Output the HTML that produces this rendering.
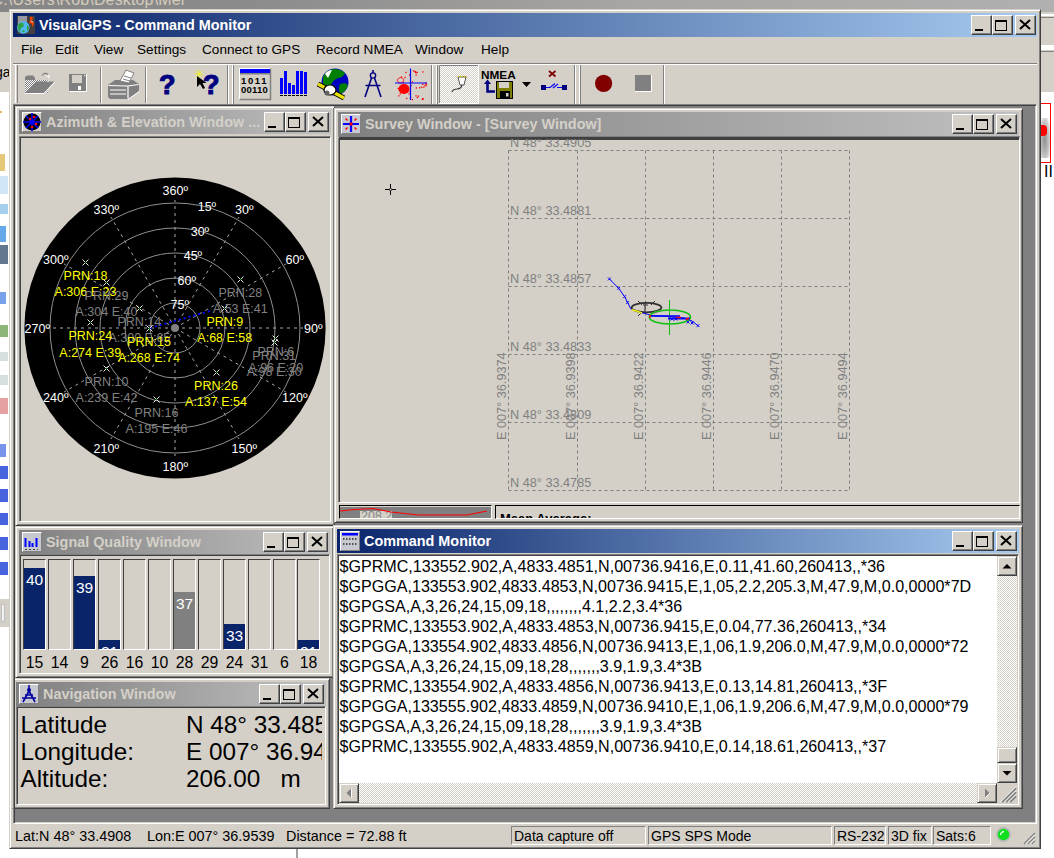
<!DOCTYPE html>
<html><head><meta charset="utf-8">
<style>
*{box-sizing:border-box;margin:0;padding:0}
html,body{width:1054px;height:858px;overflow:hidden;background:#fff;font-family:"Liberation Sans",sans-serif;}
.a{position:absolute}
.frame{position:absolute;background:#d4d0c8;border:1px solid;border-color:#d4d0c8 #404040 #404040 #d4d0c8;box-shadow:inset 1px 1px #fff,inset -1px -1px #808080}
.sunk{position:absolute;border:1px solid;border-color:#808080 #fff #fff #808080;box-shadow:inset 1px 1px #404040,inset -1px -1px #d4d0c8}
.tbar{position:absolute;height:24px;overflow:hidden}
.act{background:linear-gradient(to right,#0a246a,#a6caf0)}
.inact{background:linear-gradient(to right,#808080,#c0c0c0)}
.btn{position:absolute;width:21px;height:20px;background:#d4d0c8;border:1px solid;border-color:#fff #404040 #404040 #fff;box-shadow:inset -1px -1px #808080}
.t{position:absolute;white-space:nowrap;line-height:1}
</style></head><body>

<div class="a" style="left:0px;top:0px;width:1054px;height:858px;background:#fff"></div>
<div class="a" style="left:0px;top:0px;width:1054px;height:12px;background:linear-gradient(to right,#868686,#8c8c8c 25%,#a8a6a4 60%,#b0b0b0)"></div>
<div class="t" style="left:-8.5px;top:-8.5px;font-size:16px;letter-spacing:0.15px;color:#d4ccbc">C:\Users\Rob\Desktop\Mer</div>
<div class="a" style="left:0px;top:12px;width:9px;height:80px;background:#d4d0c8"></div>
<div class="t" style="left:-5px;top:65px;font-size:14px;color:#000">ga</div>
<div class="a" style="left:1041px;top:12px;width:13px;height:80px;background:#d4d0c8"></div>
<div class="a" style="left:1041px;top:14px;width:13px;height:2px;background:#fff"></div>
<div class="a" style="left:1041px;top:17px;width:13px;height:1px;background:#808080"></div>
<div class="a" style="left:1041px;top:45px;width:13px;height:5px;background:#fff"></div>
<div class="a" style="left:1041px;top:51px;width:13px;height:1px;background:#808080"></div>
<div class="a" style="left:1040px;top:103px;width:11px;height:60px;border:1px solid #f00;background:#fff"></div>
<div class="a" style="left:1041px;top:118px;width:9px;height:40px;background:radial-gradient(ellipse at 40% 55%,#909090,#c8c8c8 60%,#fff 90%)"></div>
<div class="a" style="left:1041px;top:125px;width:6px;height:11px;background:#f00;border-radius:0 4px 4px 0"></div>
<div class="t" style="left:1044px;top:164px;font-family:"Liberation Serif";font-size:13px;font-weight:bold;color:#000">II</div>
<div class="a" style="left:296px;top:849px;width:2px;height:9px;background:#a0a0a0"></div>
<div class="a" style="left:0px;top:599px;width:9px;height:28px;background:#d4d0c8"></div>
<div class="a" style="left:1px;top:604px;width:4px;height:18px;background:#f0f0f0;border:1px solid #c0c0c0"></div>
<div class="a" style="left:0px;top:111px;width:2px;height:2px;background:#f0a040;opacity:0.85"></div>
<div class="a" style="left:0px;top:154px;width:5px;height:17px;background:#e0c060;opacity:0.85"></div>
<div class="a" style="left:0px;top:176px;width:8px;height:18px;background:#c8e0f4;opacity:0.85"></div>
<div class="a" style="left:0px;top:204px;width:8px;height:10px;background:#98c8ec;opacity:0.85"></div>
<div class="a" style="left:0px;top:226px;width:6px;height:16px;background:#4a98e4;opacity:0.85"></div>
<div class="a" style="left:0px;top:245px;width:8px;height:19px;background:#48607a;opacity:0.85"></div>
<div class="a" style="left:0px;top:292px;width:6px;height:12px;background:#6090e8;opacity:0.85"></div>
<div class="a" style="left:0px;top:325px;width:8px;height:12px;background:#7aa860;opacity:0.85"></div>
<div class="a" style="left:0px;top:352px;width:8px;height:9px;background:#d0d8d8;opacity:0.85"></div>
<div class="a" style="left:0px;top:375px;width:8px;height:10px;background:#d0d8d8;opacity:0.85"></div>
<div class="a" style="left:0px;top:398px;width:8px;height:16px;background:#e09090;opacity:0.85"></div>
<div class="a" style="left:0px;top:444px;width:6px;height:13px;background:#6080e8;opacity:0.85"></div>
<div class="a" style="left:0px;top:466px;width:8px;height:13px;background:#2848d8;opacity:0.85"></div>
<div class="a" style="left:0px;top:489px;width:8px;height:13px;background:#2848d8;opacity:0.85"></div>
<div class="a" style="left:0px;top:513px;width:8px;height:12px;background:#2848d8;opacity:0.85"></div>
<div class="a" style="left:0px;top:537px;width:8px;height:13px;background:#2848d8;opacity:0.85"></div>
<div class="a" style="left:0px;top:562px;width:8px;height:13px;background:#2848d8;opacity:0.85"></div>
<div class="frame" style="left:9px;top:9px;width:1032px;height:840px"></div>
<div class="tbar act" style="left:13px;top:13px;width:1024px"></div>
<svg class="a" style="left:17px;top:16px" width="18" height="18" viewBox="0 0 18 18"><rect width="18" height="18" fill="#454040"/><rect x="1" y="0" width="9" height="8" fill="#9898a0"/><circle cx="6.3" cy="11.5" r="6.2" fill="#50b8f0"/><path d="M1 9Q3 6 6 7L7 10L4 12L3 16Q1 14 1 11Z" fill="#30a040"/><path d="M10 9Q12 10 12 13L10 15Z" fill="#30a040"/><path d="M5 15Q6 17 8 16L7 14Z" fill="#30a040"/><path d="M13 1Q16 0 16 3L14 5L17 6Q17 9 15 11L15 8L12 7L13 4Z" fill="#f04000"/><path d="M14 5L16 6" stroke="#fff" stroke-width="0.8"/></svg>
<div class="t" style="left:39px;top:17.5px;font-size:14.4px;font-weight:bold;color:#fff">VisualGPS - Command Monitor</div>
<div class="btn" style="left:971px;top:15px"></div>
<div class="a" style="left:975px;top:29px;width:8px;height:2px;background:#000"></div>
<div class="btn" style="left:992px;top:15px"></div>
<div class="a" style="left:995px;top:20px;width:12px;height:11px;border:1px solid #000;border-top-width:2px"></div>
<div class="btn" style="left:1015px;top:15px"></div>
<svg class="a" style="left:1019px;top:19px" width="12" height="11" viewBox="0 0 12 11"><path d="M1 1 L11 10 M11 1 L1 10" stroke="#000" stroke-width="2"/></svg>
<div class="t" style="left:21px;top:43px;font-size:13.6px;color:#000">File</div>
<div class="t" style="left:55px;top:43px;font-size:13.6px;color:#000">Edit</div>
<div class="t" style="left:94px;top:43px;font-size:13.6px;color:#000">View</div>
<div class="t" style="left:137px;top:43px;font-size:13.6px;color:#000">Settings</div>
<div class="t" style="left:202px;top:43px;font-size:13.6px;color:#000">Connect to GPS</div>
<div class="t" style="left:316px;top:43px;font-size:13.6px;color:#000">Record NMEA</div>
<div class="t" style="left:415px;top:43px;font-size:13.6px;color:#000">Window</div>
<div class="t" style="left:481px;top:43px;font-size:13.6px;color:#000">Help</div>
<div class="a" style="left:13px;top:63px;width:1024px;height:1px;background:#808080"></div>
<div class="a" style="left:13px;top:64px;width:1024px;height:1px;background:#fff"></div>
<div class="a" style="left:15px;top:65px;width:1px;height:38px;background:#fff"></div>
<div class="a" style="left:16px;top:65px;width:1px;height:38px;background:#d4d0c8"></div>
<div class="a" style="left:17px;top:65px;width:1px;height:38px;background:#808080"></div>
<div class="a" style="left:100px;top:67px;width:1px;height:36px;background:#808080"></div>
<div class="a" style="left:101px;top:67px;width:1px;height:36px;background:#fff"></div>
<div class="a" style="left:145px;top:67px;width:1px;height:36px;background:#808080"></div>
<div class="a" style="left:146px;top:67px;width:1px;height:36px;background:#fff"></div>
<div class="a" style="left:227px;top:65px;width:1px;height:39px;background:#808080"></div>
<div class="a" style="left:228px;top:65px;width:1px;height:39px;background:#fff"></div>
<div class="a" style="left:232px;top:65px;width:1px;height:39px;background:#fff"></div>
<div class="a" style="left:233px;top:65px;width:1px;height:39px;background:#808080"></div>
<div class="a" style="left:431px;top:65px;width:1px;height:39px;background:#808080"></div>
<div class="a" style="left:432px;top:65px;width:1px;height:39px;background:#fff"></div>
<div class="a" style="left:436px;top:65px;width:1px;height:39px;background:#fff"></div>
<div class="a" style="left:437px;top:65px;width:1px;height:39px;background:#808080"></div>
<div class="a" style="left:574px;top:65px;width:1px;height:39px;background:#808080"></div>
<div class="a" style="left:575px;top:65px;width:1px;height:39px;background:#fff"></div>
<div class="a" style="left:579px;top:65px;width:1px;height:39px;background:#fff"></div>
<div class="a" style="left:580px;top:65px;width:1px;height:39px;background:#808080"></div>
<div class="a" style="left:663px;top:65px;width:1px;height:39px;background:#808080"></div>
<div class="a" style="left:664px;top:65px;width:1px;height:39px;background:#fff"></div>
<svg class="a" style="left:0;top:0" width="700" height="110" viewBox="0 0 700 110"><defs><pattern id="dith" width="2" height="2" patternUnits="userSpaceOnUse"><rect width="2" height="2" fill="#808080"/><rect width="1" height="1" fill="#fff"/><rect x="1" y="1" width="1" height="1" fill="#fff"/></pattern><pattern id="dith2" width="2" height="2" patternUnits="userSpaceOnUse"><rect width="2" height="2" fill="#d4d0c8"/><rect width="1" height="1" fill="#fff"/><rect x="1" y="1" width="1" height="1" fill="#fff"/></pattern></defs><path d="M25 80V77L27 75.5H33L35 77.5V80Z" fill="#808080"/><rect x="25" y="80" width="23" height="13" fill="url(#dith)"/><path d="M25 93L36.5 81.5H54.5L43.5 93Z" fill="#808080"/><path d="M25 93.5H44L55 82" stroke="#fff" stroke-width="1" fill="none"/><path d="M48 80.5V82" stroke="#fff" stroke-width="1"/><path d="M42 75.5Q44.5 72 48 74.5" stroke="#808080" stroke-width="1.2" fill="none"/><path d="M46.5 76.5L49.5 75.5L48.5 78.5" stroke="#fff" stroke-width="1" fill="none"/><rect x="69" y="74" width="17" height="17" fill="#808080"/><rect x="72" y="75" width="10" height="8" fill="#d4d0c8"/><rect x="78" y="86" width="3" height="4" fill="#fff"/><rect x="84" y="75" width="1.2" height="1.2" fill="#fff"/><path d="M69.5 91.5H86.5V74" stroke="#fff" stroke-width="1" fill="none"/><path d="M108 85L115 80H133L139 84V91L128 99H110L108 97Z" fill="#808080"/><path d="M108.5 85.5L128 86M128 86V98.5M128 86L138.5 84.5M110 90H126M110 94H126" stroke="#fff" stroke-width="1.2" fill="none"/><path d="M120 81L126 70L134 73L129 83Z" fill="#fff" stroke="#808080" stroke-width="1"/><path d="M124 76L131 78M123 79L130 81" stroke="#808080" stroke-width="1"/><path d="M128 99.5L139.5 91.5" stroke="#fff" stroke-width="1"/><text x="159" y="93.5" font-family="Liberation Sans" font-weight="bold" font-size="27" fill="#000080" stroke="#000080" stroke-width="1.1">?</text><text x="203" y="93.5" font-family="Liberation Sans" font-weight="bold" font-size="27" fill="#000080" stroke="#000080" stroke-width="1.1">?</text><path d="M195.5 70.5L202.5 77.5M202.5 70.5L195.5 77.5M199 69.5V78.5M194.5 74H203.5" stroke="#f0f020" stroke-width="0.8"/><path d="M197 76V87L200 84L203 89L205 88L202.5 83H206.5Z" fill="#000"/><rect x="239.5" y="68.5" width="31" height="31" fill="#d4d0c8" stroke="#fff" stroke-width="1"/><path d="M270.5 68.5V99.5H239.5" stroke="#808080" stroke-width="1.5" fill="none"/><rect x="240" y="69" width="30" height="4" fill="#0000ff"/><rect x="240" y="73" width="30" height="1.5" fill="#808080"/><text x="241" y="83.5" font-family="Liberation Sans" font-weight="bold" font-size="9.5" fill="#000" letter-spacing="1.6">1011</text><text x="241" y="93" font-family="Liberation Sans" font-weight="bold" font-size="9.5" fill="#000" letter-spacing="0.2">00110</text><rect x="280" y="78" width="3" height="16" fill="#0000ff"/><rect x="284" y="71" width="3" height="23" fill="#0000ff"/><rect x="288" y="83" width="3" height="11" fill="#0000ff"/><rect x="292" y="85" width="3" height="9" fill="#0000ff"/><rect x="296" y="71" width="3" height="23" fill="#0000ff"/><rect x="300" y="71" width="3" height="23" fill="#0000ff"/><rect x="304" y="72" width="3" height="22" fill="#0000ff"/><path d="M280 95.5H307" stroke="#000" stroke-width="1" stroke-dasharray="3 1"/><circle cx="335" cy="82" r="13.5" fill="#0000c0"/><path d="M323 77Q326 70 333 69Q341 69 345 73Q343 78 338 78Q333 80 331 85Q327 88 323 84Z" fill="#008000"/><path d="M325 74Q328 70 332 70L328 78Z" fill="#fff"/><path d="M340 84Q346 82 348 85Q346 92 340 94Q338 89 340 84Z" fill="#008000"/><path d="M318 84L344 98" stroke="#000" stroke-width="5"/><path d="M318 84L344 98" stroke="#e8e000" stroke-width="3.2"/><ellipse cx="330" cy="90" rx="6" ry="5" fill="#fff" stroke="#000" stroke-width="1.2"/><circle cx="327" cy="93" r="2.5" fill="#606060"/><circle cx="373" cy="75.5" r="2.6" fill="none" stroke="#000080" stroke-width="1.4"/><path d="M373 70V73M371.5 78L365 97M374.5 78L381 97M365.5 85.5H380.5" stroke="#000080" stroke-width="1.6" fill="none"/><rect x="407.7" y="87.5" width="1.3" height="1.3" fill="#ff0000"/><rect x="415.1" y="71.9" width="1.3" height="1.3" fill="#ff0000"/><rect x="404.5" y="76.8" width="1.3" height="1.3" fill="#ff0000"/><rect x="425.9" y="83.6" width="1.3" height="1.3" fill="#ff0000"/><rect x="415.5" y="74.4" width="1.3" height="1.3" fill="#ff0000"/><rect x="415.4" y="95.2" width="1.3" height="1.3" fill="#ff0000"/><rect x="416.5" y="71.9" width="1.3" height="1.3" fill="#ff0000"/><rect x="419.0" y="87.1" width="1.3" height="1.3" fill="#ff0000"/><rect x="422.1" y="83.7" width="1.3" height="1.3" fill="#ff0000"/><rect x="417.8" y="95.5" width="1.3" height="1.3" fill="#ff0000"/><rect x="408.5" y="93.2" width="1.3" height="1.3" fill="#ff0000"/><rect x="409.9" y="97.1" width="1.3" height="1.3" fill="#ff0000"/><rect x="400.9" y="76.3" width="1.3" height="1.3" fill="#ff0000"/><rect x="425.0" y="82.6" width="1.3" height="1.3" fill="#ff0000"/><rect x="411.7" y="81.2" width="1.3" height="1.3" fill="#ff0000"/><rect x="407.2" y="87.0" width="1.3" height="1.3" fill="#ff0000"/><rect x="416.8" y="96.9" width="1.3" height="1.3" fill="#ff0000"/><rect x="421.8" y="98.7" width="1.3" height="1.3" fill="#ff0000"/><rect x="422.0" y="98.0" width="1.3" height="1.3" fill="#ff0000"/><rect x="423.2" y="86.5" width="1.3" height="1.3" fill="#ff0000"/><rect x="421.1" y="86.6" width="1.3" height="1.3" fill="#ff0000"/><rect x="405.3" y="71.8" width="1.3" height="1.3" fill="#ff0000"/><rect x="399.6" y="93.2" width="1.3" height="1.3" fill="#ff0000"/><rect x="408.9" y="74.4" width="1.3" height="1.3" fill="#ff0000"/><rect x="422.3" y="71.3" width="1.3" height="1.3" fill="#ff0000"/><rect x="414.8" y="71.3" width="1.3" height="1.3" fill="#ff0000"/><rect x="422.5" y="98.4" width="1.3" height="1.3" fill="#ff0000"/><rect x="411.7" y="99.0" width="1.3" height="1.3" fill="#ff0000"/><rect x="414.4" y="70.9" width="1.3" height="1.3" fill="#ff0000"/><rect x="402.7" y="81.8" width="1.3" height="1.3" fill="#ff0000"/><rect x="398.2" y="95.2" width="1.3" height="1.3" fill="#ff0000"/><rect x="406.1" y="97.8" width="1.3" height="1.3" fill="#ff0000"/><rect x="410.4" y="85.1" width="1.3" height="1.3" fill="#ff0000"/><rect x="415.7" y="87.3" width="1.3" height="1.3" fill="#ff0000"/><rect x="424.3" y="84.7" width="1.3" height="1.3" fill="#ff0000"/><rect x="409.5" y="90.9" width="1.3" height="1.3" fill="#ff0000"/><rect x="425.4" y="85.1" width="1.3" height="1.3" fill="#ff0000"/><rect x="412.9" y="70.3" width="1.3" height="1.3" fill="#ff0000"/><rect x="397.6" y="87.9" width="1.3" height="1.3" fill="#ff0000"/><rect x="415.3" y="71.7" width="1.3" height="1.3" fill="#ff0000"/><ellipse cx="404" cy="89" rx="5.5" ry="5" fill="#ff0000"/><path d="M397 80Q401 75 404 80Q402 84 399 83Z" fill="none" stroke="#f00" stroke-width="0.8"/><path d="M395 83H427M410.5 68.5V100" stroke="#0000ff" stroke-width="1.2"/><rect x="439" y="65" width="39" height="38" fill="url(#dith2)"/><path d="M439.5 103V65.5H478" stroke="#808080" stroke-width="1" fill="none"/><path d="M478.5 65V103.5H439" stroke="#fff" stroke-width="1" fill="none"/><path d="M458 77H466L464 85H460Z" fill="#fff" stroke="#404040" stroke-width="0.9"/><path d="M458 76.5H466.5" stroke="#e0d000" stroke-width="1.5" stroke-dasharray="1 1"/><path d="M462 85Q461 89 457 89Q453 89 452 92" stroke="#404040" stroke-width="1.2" fill="none"/><text x="481" y="78.5" font-family="Liberation Sans" font-weight="bold" font-size="11.8" fill="#000">NMEA</text><path d="M487.5 81V91.5H495" stroke="#000080" stroke-width="2.6" fill="none"/><path d="M484 84L487.5 79.5L491 84Z" fill="#000080"/><rect x="496.5" y="81.5" width="16" height="17" fill="#808000" stroke="#000" stroke-width="1"/><rect x="499" y="82" width="10" height="6" fill="#d4d0c8"/><rect x="500" y="91" width="10" height="7" fill="#000"/><rect x="506" y="93" width="2.5" height="3.5" fill="#d4d0c8"/><path d="M522 82H531L526.5 87Z" fill="#000"/><path d="M549 71L555.5 76.5M555.5 71L549 76.5" stroke="#800000" stroke-width="1.8"/><rect x="541" y="85" width="5" height="5" fill="#000080"/><rect x="562" y="85" width="5" height="5" fill="#000080"/><path d="M546 87.5H550L555 83.5M553 88L558 84M557 87.5H562" stroke="#0000ff" stroke-width="1.2" fill="none"/><circle cx="603.6" cy="83.3" r="8.6" fill="#800000"/><rect x="635" y="75" width="16" height="16" fill="#808080"/><path d="M635 91.5H651.5V75" stroke="#fff" stroke-width="1" fill="none"/></svg>
<div class="sunk" style="left:13px;top:104px;width:1024px;height:720px;background:#808080"></div>
<div class="t" style="left:15px;top:829px;font-size:14.4px;color:#000">Lat:N 48° 33.4908</div>
<div class="t" style="left:147px;top:829px;font-size:14.4px;color:#000">Lon:E 007° 36.9539</div>
<div class="t" style="left:286px;top:829px;font-size:14.4px;color:#000">Distance = 72.88 ft</div>
<div class="a" style="left:511px;top:826px;width:135px;height:19px;border:1px solid;border-color:#808080 #fff #fff #808080"></div>
<div class="t" style="left:514px;top:829px;font-size:14px;color:#000">Data capture off</div>
<div class="a" style="left:648px;top:826px;width:184px;height:19px;border:1px solid;border-color:#808080 #fff #fff #808080"></div>
<div class="t" style="left:651px;top:829px;font-size:14px;color:#000">GPS SPS Mode</div>
<div class="a" style="left:834px;top:826px;width:52px;height:19px;border:1px solid;border-color:#808080 #fff #fff #808080"></div>
<div class="t" style="left:837px;top:829px;font-size:14px;color:#000">RS-232</div>
<div class="a" style="left:888px;top:826px;width:44px;height:19px;border:1px solid;border-color:#808080 #fff #fff #808080"></div>
<div class="t" style="left:891px;top:829px;font-size:14px;color:#000">3D fix</div>
<div class="a" style="left:933px;top:826px;width:58px;height:19px;border:1px solid;border-color:#808080 #fff #fff #808080"></div>
<div class="t" style="left:936px;top:829px;font-size:14px;color:#000">Sats:6</div>
<svg class="a" style="left:1022px;top:831px" width="14" height="14"><path d="M13 2L2 13M13 6L6 13M13 10L10 13" stroke="#808080" stroke-width="1.4"/><path d="M13 3.5L3.5 13M13 7.5L7.5 13M13 11.5L11.5 13" stroke="#fff" stroke-width="0.8"/></svg>
<svg class="a" style="left:996px;top:827px" width="16" height="16"><circle cx="7.5" cy="7.5" r="6.6" fill="#10e020" stroke="#b8b8b8" stroke-width="1.6"/><path d="M4.5 8Q4.8 4.8 8 4.5" stroke="#e0ffe0" stroke-width="1.3" fill="none"/></svg>
<div class="frame" style="left:15px;top:106px;width:320px;height:420px"></div>
<div class="tbar inact" style="left:19px;top:110px;width:312px"></div>
<div class="a" style="left:22px;top:112px;width:20px;height:20px;background:#d4d0c8;border:1px solid;border-color:#fff #808080 #808080 #fff"></div><svg class="a" style="left:22px;top:112px" width="20" height="20" viewBox="0 0 20 20"><circle cx="10" cy="10" r="8.5" fill="#000"/><path d="M10 1V19M1 10H19M4 4L16 16M16 4L4 16" stroke="#0000ff" stroke-width="1.6"/><circle cx="10" cy="10" r="2" fill="#00f"/><circle cx="12" cy="5" r="1.3" fill="#f00"/><circle cx="8" cy="7" r="1.3" fill="#f00"/><circle cx="14" cy="12" r="1.3" fill="#f00"/><circle cx="10" cy="15" r="1.3" fill="#f00"/></svg>
<div class="t" style="left:46px;top:114.5px;font-size:14.4px;font-weight:bold;color:#d4d0c8">Azimuth &amp; Elevation Window ...</div>
<div class="btn" style="left:264px;top:112px"></div>
<div class="a" style="left:268px;top:126px;width:8px;height:2px;background:#000"></div>
<div class="btn" style="left:285px;top:112px"></div>
<div class="a" style="left:288px;top:117px;width:12px;height:11px;border:1px solid #000;border-top-width:2px"></div>
<div class="btn" style="left:308px;top:112px"></div>
<svg class="a" style="left:312px;top:116px" width="12" height="11" viewBox="0 0 12 11"><path d="M1 1 L11 10 M11 1 L1 10" stroke="#000" stroke-width="2"/></svg>
<div class="sunk" style="left:19px;top:136px;width:312px;height:386px;background:#d4d0c8"></div>
<svg class="a" style="left:0;top:0" width="1054" height="858" viewBox="0 0 1054 858"><defs><clipPath id="azc"><rect x="21" y="138" width="308" height="382"/></clipPath></defs><g clip-path="url(#azc)"><circle cx="175" cy="328" r="150.6" fill="#000"/><circle cx="175" cy="328" r="25" fill="none" stroke="#909090" stroke-width="1"/><circle cx="175" cy="328" r="50" fill="none" stroke="#909090" stroke-width="1"/><circle cx="175" cy="328" r="75" fill="none" stroke="#909090" stroke-width="1"/><circle cx="175" cy="328" r="100" fill="none" stroke="#909090" stroke-width="1"/><circle cx="175" cy="328" r="125" fill="none" stroke="#909090" stroke-width="1"/><line x1="175" y1="328" x2="175.0" y2="200.0" stroke="#a8a8a8" stroke-width="1" stroke-dasharray="3 4"/><line x1="175" y1="328" x2="239.0" y2="217.1" stroke="#a8a8a8" stroke-width="1" stroke-dasharray="3 4"/><line x1="175" y1="328" x2="285.9" y2="264.0" stroke="#a8a8a8" stroke-width="1" stroke-dasharray="3 4"/><line x1="175" y1="328" x2="303.0" y2="328.0" stroke="#a8a8a8" stroke-width="1" stroke-dasharray="3 4"/><line x1="175" y1="328" x2="285.9" y2="392.0" stroke="#a8a8a8" stroke-width="1" stroke-dasharray="3 4"/><line x1="175" y1="328" x2="239.0" y2="438.9" stroke="#a8a8a8" stroke-width="1" stroke-dasharray="3 4"/><line x1="175" y1="328" x2="175.0" y2="456.0" stroke="#a8a8a8" stroke-width="1" stroke-dasharray="3 4"/><line x1="175" y1="328" x2="111.0" y2="438.9" stroke="#a8a8a8" stroke-width="1" stroke-dasharray="3 4"/><line x1="175" y1="328" x2="64.1" y2="392.0" stroke="#a8a8a8" stroke-width="1" stroke-dasharray="3 4"/><line x1="175" y1="328" x2="47.0" y2="328.0" stroke="#a8a8a8" stroke-width="1" stroke-dasharray="3 4"/><line x1="175" y1="328" x2="64.1" y2="264.0" stroke="#a8a8a8" stroke-width="1" stroke-dasharray="3 4"/><line x1="175" y1="328" x2="111.0" y2="217.1" stroke="#a8a8a8" stroke-width="1" stroke-dasharray="3 4"/><circle cx="175" cy="328" r="4" fill="#808080"/><polyline points="150,328 210,311" stroke="#0000ff" stroke-width="2" stroke-dasharray="2 3" fill="none"/></g></svg>
<div class="t" style="left:135.3px;top:185.2px;width:80px;text-align:center;font-size:12.5px;color:#fff">360º</div>
<div class="t" style="left:204.3px;top:203.7px;width:80px;text-align:center;font-size:12.5px;color:#fff">30º</div>
<div class="t" style="left:254.8px;top:254.2px;width:80px;text-align:center;font-size:12.5px;color:#fff">60º</div>
<div class="t" style="left:273.3px;top:323.2px;width:80px;text-align:center;font-size:12.5px;color:#fff">90º</div>
<div class="t" style="left:254.8px;top:392.2px;width:80px;text-align:center;font-size:12.5px;color:#fff">120º</div>
<div class="t" style="left:204.3px;top:442.7px;width:80px;text-align:center;font-size:12.5px;color:#fff">150º</div>
<div class="t" style="left:135.3px;top:461.2px;width:80px;text-align:center;font-size:12.5px;color:#fff">180º</div>
<div class="t" style="left:66.3px;top:442.7px;width:80px;text-align:center;font-size:12.5px;color:#fff">210º</div>
<div class="t" style="left:15.8px;top:392.2px;width:80px;text-align:center;font-size:12.5px;color:#fff">240º</div>
<div class="t" style="left:-2.7px;top:323.2px;width:80px;text-align:center;font-size:12.5px;color:#fff">270º</div>
<div class="t" style="left:15.8px;top:254.2px;width:80px;text-align:center;font-size:12.5px;color:#fff">300º</div>
<div class="t" style="left:66.3px;top:203.7px;width:80px;text-align:center;font-size:12.5px;color:#fff">330º</div>
<div class="t" style="left:197.7px;top:201.0px;font-size:12.5px;color:#fff">15º</div>
<div class="t" style="left:190.7px;top:225.6px;font-size:12.5px;color:#fff">30º</div>
<div class="t" style="left:183.7px;top:250.4px;font-size:12.5px;color:#fff">45º</div>
<div class="t" style="left:177.6px;top:274.6px;font-size:12.5px;color:#fff">60º</div>
<div class="t" style="left:170.6px;top:298.5px;font-size:12.5px;color:#fff">75º</div>
<svg class="a" style="left:82.0px;top:258.8px" width="7" height="7" viewBox="0 0 7 7"><path d="M0.5 0.5L6.5 6.5M6.5 0.5L0.5 6.5" stroke="#e8e8e8" stroke-width="1"/><rect x="3" y="3" width="1" height="1" fill="#0c0"/></svg>
<div class="t" style="left:35.5px;top:269.8px;width:100px;text-align:center;font-size:12.5px;color:#ffff00">PRN:18</div>
<div class="t" style="left:25.5px;top:286.0px;width:120px;text-align:center;font-size:12.5px;color:#ffff00">A:306 E:23</div>
<svg class="a" style="left:103.0px;top:278.8px" width="7" height="7" viewBox="0 0 7 7"><path d="M0.5 0.5L6.5 6.5M6.5 0.5L0.5 6.5" stroke="#e8e8e8" stroke-width="1"/><rect x="3" y="3" width="1" height="1" fill="#0c0"/></svg>
<div class="t" style="left:56.5px;top:289.8px;width:100px;text-align:center;font-size:12.5px;color:#808080">PRN:29</div>
<div class="t" style="left:46.5px;top:306.0px;width:120px;text-align:center;font-size:12.5px;color:#808080">A:304 E:40</div>
<svg class="a" style="left:135.9px;top:304.5px" width="7" height="7" viewBox="0 0 7 7"><path d="M0.5 0.5L6.5 6.5M6.5 0.5L0.5 6.5" stroke="#e8e8e8" stroke-width="1"/><rect x="3" y="3" width="1" height="1" fill="#0c0"/></svg>
<div class="t" style="left:89.4px;top:315.5px;width:100px;text-align:center;font-size:12.5px;color:#808080">PRN:14</div>
<div class="t" style="left:79.4px;top:331.7px;width:120px;text-align:center;font-size:12.5px;color:#808080">A:300 E:65</div>
<svg class="a" style="left:236.8px;top:275.5px" width="7" height="7" viewBox="0 0 7 7"><path d="M0.5 0.5L6.5 6.5M6.5 0.5L0.5 6.5" stroke="#e8e8e8" stroke-width="1"/><rect x="3" y="3" width="1" height="1" fill="#0c0"/></svg>
<div class="t" style="left:190.3px;top:286.5px;width:100px;text-align:center;font-size:12.5px;color:#808080">PRN:28</div>
<div class="t" style="left:180.3px;top:302.7px;width:120px;text-align:center;font-size:12.5px;color:#808080">A:53 E:41</div>
<svg class="a" style="left:103.0px;top:365.2px" width="7" height="7" viewBox="0 0 7 7"><path d="M0.5 0.5L6.5 6.5M6.5 0.5L0.5 6.5" stroke="#e8e8e8" stroke-width="1"/><rect x="3" y="3" width="1" height="1" fill="#0c0"/></svg>
<div class="t" style="left:56.5px;top:376.2px;width:100px;text-align:center;font-size:12.5px;color:#808080">PRN:10</div>
<div class="t" style="left:46.5px;top:392.4px;width:120px;text-align:center;font-size:12.5px;color:#808080">A:239 E:42</div>
<svg class="a" style="left:153.0px;top:395.9px" width="7" height="7" viewBox="0 0 7 7"><path d="M0.5 0.5L6.5 6.5M6.5 0.5L0.5 6.5" stroke="#e8e8e8" stroke-width="1"/><rect x="3" y="3" width="1" height="1" fill="#0c0"/></svg>
<div class="t" style="left:106.5px;top:406.9px;width:100px;text-align:center;font-size:12.5px;color:#808080">PRN:16</div>
<div class="t" style="left:96.5px;top:423.1px;width:120px;text-align:center;font-size:12.5px;color:#808080">A:195 E:46</div>
<svg class="a" style="left:270.7px;top:338.8px" width="7" height="7" viewBox="0 0 7 7"><path d="M0.5 0.5L6.5 6.5M6.5 0.5L0.5 6.5" stroke="#e8e8e8" stroke-width="1"/><rect x="3" y="3" width="1" height="1" fill="#0c0"/></svg>
<div class="t" style="left:224.2px;top:349.8px;width:100px;text-align:center;font-size:12.5px;color:#808080">PRN:31</div>
<div class="t" style="left:214.2px;top:366.0px;width:120px;text-align:center;font-size:12.5px;color:#808080">A:98 E:30</div>
<svg class="a" style="left:272.3px;top:334.5px" width="7" height="7" viewBox="0 0 7 7"><path d="M0.5 0.5L6.5 6.5M6.5 0.5L0.5 6.5" stroke="#e8e8e8" stroke-width="1"/><rect x="3" y="3" width="1" height="1" fill="#0c0"/></svg>
<div class="t" style="left:225.8px;top:345.5px;width:100px;text-align:center;font-size:12.5px;color:#808080">PRN:6</div>
<div class="t" style="left:215.8px;top:361.7px;width:120px;text-align:center;font-size:12.5px;color:#808080">A:96 E:20</div>
<svg class="a" style="left:86.8px;top:319.4px" width="7" height="7" viewBox="0 0 7 7"><path d="M0.5 0.5L6.5 6.5M6.5 0.5L0.5 6.5" stroke="#e8e8e8" stroke-width="1"/><rect x="3" y="3" width="1" height="1" fill="#0c0"/></svg>
<div class="t" style="left:40.3px;top:330.4px;width:100px;text-align:center;font-size:12.5px;color:#ffff00">PRN:24</div>
<div class="t" style="left:30.3px;top:346.6px;width:120px;text-align:center;font-size:12.5px;color:#ffff00">A:274 E:39</div>
<svg class="a" style="left:145.5px;top:324.9px" width="7" height="7" viewBox="0 0 7 7"><path d="M0.5 0.5L6.5 6.5M6.5 0.5L0.5 6.5" stroke="#e8e8e8" stroke-width="1"/><rect x="3" y="3" width="1" height="1" fill="#0c0"/></svg>
<div class="t" style="left:99.0px;top:335.9px;width:100px;text-align:center;font-size:12.5px;color:#ffff00">PRN:15</div>
<div class="t" style="left:89.0px;top:352.1px;width:120px;text-align:center;font-size:12.5px;color:#ffff00">A:268 E:74</div>
<svg class="a" style="left:221.3px;top:304.9px" width="7" height="7" viewBox="0 0 7 7"><path d="M0.5 0.5L6.5 6.5M6.5 0.5L0.5 6.5" stroke="#e8e8e8" stroke-width="1"/><rect x="3" y="3" width="1" height="1" fill="#0c0"/></svg>
<div class="t" style="left:174.8px;top:315.9px;width:100px;text-align:center;font-size:12.5px;color:#ffff00">PRN:9</div>
<div class="t" style="left:164.8px;top:332.1px;width:120px;text-align:center;font-size:12.5px;color:#ffff00">A:68 E:58</div>
<svg class="a" style="left:212.5px;top:369.1px" width="7" height="7" viewBox="0 0 7 7"><path d="M0.5 0.5L6.5 6.5M6.5 0.5L0.5 6.5" stroke="#e8e8e8" stroke-width="1"/><rect x="3" y="3" width="1" height="1" fill="#0c0"/></svg>
<div class="t" style="left:166.0px;top:380.1px;width:100px;text-align:center;font-size:12.5px;color:#ffff00">PRN:26</div>
<div class="t" style="left:156.0px;top:396.3px;width:120px;text-align:center;font-size:12.5px;color:#ffff00">A:137 E:54</div>
<div class="frame" style="left:334px;top:108px;width:689px;height:415px"></div>
<div class="tbar inact" style="left:338px;top:112px;width:681px"></div>
<div class="a" style="left:341px;top:114px;width:20px;height:20px;background:#c8c8d0;border:1px solid;border-color:#fff #808080 #808080 #fff"></div><svg class="a" style="left:341px;top:114px" width="20" height="20" viewBox="0 0 20 20"><path d="M10 2V18M2 10H18" stroke="#0000ff" stroke-width="2.2"/><rect x="8.5" y="8.5" width="3" height="3" fill="#f00"/><path d="M4.5 4.5L6.5 6.5M15.5 4.5L13.5 6.5M4.5 15.5L6.5 13.5M15.5 15.5L13.5 13.5" stroke="#f00" stroke-width="1.4"/></svg>
<div class="t" style="left:365px;top:116.5px;font-size:14.4px;font-weight:bold;color:#d4d0c8">Survey Window - [Survey Window]</div>
<div class="btn" style="left:952px;top:114px"></div>
<div class="a" style="left:956px;top:128px;width:8px;height:2px;background:#000"></div>
<div class="btn" style="left:973px;top:114px"></div>
<div class="a" style="left:976px;top:119px;width:12px;height:11px;border:1px solid #000;border-top-width:2px"></div>
<div class="btn" style="left:996px;top:114px"></div>
<svg class="a" style="left:1000px;top:118px" width="12" height="11" viewBox="0 0 12 11"><path d="M1 1 L11 10 M11 1 L1 10" stroke="#000" stroke-width="2"/></svg>
<div class="a" style="left:338px;top:138px;width:682px;height:365px;border:1px solid;border-color:#808080 #fff #fff #808080;box-shadow:inset 1px 1px #404040"></div>
<svg class="a" style="left:0;top:0" width="1054" height="858" viewBox="0 0 1054 858"><defs><clipPath id="svc"><rect x="340" y="140" width="678" height="361"/></clipPath></defs><g clip-path="url(#svc)" stroke="#808080" stroke-width="1" stroke-dasharray="3 3" fill="none"><line x1="508.5" y1="150.5" x2="508.5" y2="490.5"/><line x1="577.5" y1="150.5" x2="577.5" y2="490.5"/><line x1="645.5" y1="150.5" x2="645.5" y2="490.5"/><line x1="713.5" y1="150.5" x2="713.5" y2="490.5"/><line x1="781.5" y1="150.5" x2="781.5" y2="490.5"/><line x1="849.5" y1="150.5" x2="849.5" y2="490.5"/><line x1="508.5" y1="150.5" x2="849.5" y2="150.5"/><line x1="508.5" y1="218.5" x2="849.5" y2="218.5"/><line x1="508.5" y1="286.5" x2="849.5" y2="286.5"/><line x1="508.5" y1="354.5" x2="849.5" y2="354.5"/><line x1="508.5" y1="422.5" x2="849.5" y2="422.5"/><line x1="508.5" y1="490.5" x2="849.5" y2="490.5"/></g><g clip-path="url(#svc)"><ellipse cx="646.5" cy="307.6" rx="14.9" ry="4.7" stroke="#303030" stroke-width="1.8" fill="none"/><path d="M638 301L642 305M655 301L651 305M638 316L642 312M645 303V312M643 305H648" stroke="#303030" stroke-width="1"/><polyline points="609.4,278.9 618.6,288.3 624.6,296.6 627.6,302.5 631,309 636,311.5 645,313.5 652,315.5 670,316.5 684,318 692,321 698,325.7" stroke="#0000ff" stroke-width="1" fill="none"/><path d="M631.5 309.5L642 313" stroke="#f0f000" stroke-width="1.8"/><path d="M652 313.5L661 310.5" stroke="#d040d0" stroke-width="1.8"/><ellipse cx="669.9" cy="317" rx="20.6" ry="7" stroke="#10c010" stroke-width="1.6" fill="none"/><path d="M669.5 300V335" stroke="#10c010" stroke-width="1"/><path d="M651 316H680" stroke="#0000ff" stroke-width="1.6"/><path d="M668 318.5H690" stroke="#0000ff" stroke-width="2"/><path d="M650 315V318M676 317.5H681M686 319.5L689 318" stroke="#ff0000" stroke-width="1.5"/><path d="M607.9 277.4L610.9 280.4M610.9 277.4L607.9 280.4" stroke="#0000ff" stroke-width="0.9"/><path d="M617.1 286.8L620.1 289.8M620.1 286.8L617.1 289.8" stroke="#0000ff" stroke-width="0.9"/><path d="M623.1 295.1L626.1 298.1M626.1 295.1L623.1 298.1" stroke="#0000ff" stroke-width="0.9"/><path d="M626.1 301.0L629.1 304.0M629.1 301.0L626.1 304.0" stroke="#0000ff" stroke-width="0.9"/><path d="M696.5 324.2L699.5 327.2M699.5 324.2L696.5 327.2" stroke="#0000ff" stroke-width="0.9"/><path d="M686.5 320.5L689.5 323.5M689.5 320.5L686.5 323.5" stroke="#0000ff" stroke-width="0.9"/><path d="M690.5 321.5L693.5 324.5M693.5 321.5L690.5 324.5" stroke="#0000ff" stroke-width="0.9"/><path d="M670.5 317.5L673.5 320.5M673.5 317.5L670.5 320.5" stroke="#0000ff" stroke-width="0.9"/><path d="M674.5 317.5L677.5 320.5M677.5 317.5L674.5 320.5" stroke="#0000ff" stroke-width="0.9"/><path d="M390.5 184V188M390.5 191V195M385 189.5H389M392 189.5H396" stroke="#000" stroke-width="1"/><path d="M389.5 188.5h2v2h-2z" fill="none" stroke="#000" stroke-width="0.6"/></g></svg>
<div class="t" style="left:510px;top:136.5px;font-size:12.7px;color:#808080">N 48° 33.4905</div>
<div class="t" style="left:510px;top:204.5px;font-size:12.7px;color:#808080">N 48° 33.4881</div>
<div class="t" style="left:510px;top:272.5px;font-size:12.7px;color:#808080">N 48° 33.4857</div>
<div class="t" style="left:510px;top:340.5px;font-size:12.7px;color:#808080">N 48° 33.4833</div>
<div class="t" style="left:510px;top:408.5px;font-size:12.7px;color:#808080">N 48° 33.4809</div>
<div class="t" style="left:510px;top:476.5px;font-size:12.7px;color:#808080">N 48° 33.4785</div>
<div class="t" style="left:495.5px;top:440px;font-size:12.7px;color:#808080;transform-origin:0 0;transform:rotate(-90deg)">E 007° 36.9374</div>
<div class="t" style="left:564.5px;top:440px;font-size:12.7px;color:#808080;transform-origin:0 0;transform:rotate(-90deg)">E 007° 36.9398</div>
<div class="t" style="left:632.5px;top:440px;font-size:12.7px;color:#808080;transform-origin:0 0;transform:rotate(-90deg)">E 007° 36.9422</div>
<div class="t" style="left:700.5px;top:440px;font-size:12.7px;color:#808080;transform-origin:0 0;transform:rotate(-90deg)">E 007° 36.9446</div>
<div class="t" style="left:768.5px;top:440px;font-size:12.7px;color:#808080;transform-origin:0 0;transform:rotate(-90deg)">E 007° 36.9470</div>
<div class="t" style="left:836.5px;top:440px;font-size:12.7px;color:#808080;transform-origin:0 0;transform:rotate(-90deg)">E 007° 36.9494</div>
<div class="a" style="left:339px;top:137px;width:680px;height:2px;background:#404040"></div>
<div class="a" style="left:338px;top:136px;width:682px;height:1px;background:#808080"></div>
<div class="a" style="left:338px;top:136px;width:682px;height:0px;"></div>
<div class="a" style="left:339px;top:505px;width:153px;height:14px;border:1px solid;border-color:#000 #fff #fff #000;box-shadow:inset 0 1px #d4d0c8;background:#808080"></div>
<div class="a" style="left:360px;top:511px;width:32px;height:7px;overflow:hidden;background:#d4d0c8"><div class="t" style="left:1px;top:-1px;font-size:12.5px;color:#888">208.20</div></div>
<svg class="a" style="left:0;top:0" width="500" height="530"><polyline points="340,511 355,509.5 373,508.5 391,512 418,515 467,515 487,511" stroke="#ff0000" stroke-width="1.2" fill="none"/></svg>
<div class="a" style="left:495px;top:505px;width:525px;height:14px;border:1px solid;border-color:#000 #fff #fff #000;background:#d4d0c8;overflow:hidden"><div class="t" style="left:4px;top:6px;font-size:13px;font-weight:bold;color:#000">Mean Average:</div></div>
<div class="frame" style="left:15px;top:526px;width:319px;height:152px"></div>
<div class="tbar inact" style="left:19px;top:530px;width:311px"></div>
<div class="a" style="left:22px;top:532px;width:20px;height:20px;background:#c8c8d0;border:1px solid;border-color:#fff #808080 #808080 #fff"></div><svg class="a" style="left:22px;top:532px" width="20" height="20" viewBox="0 0 20 20"><path d="M3.5 6V15M7.5 9V15M10.5 11V15M14.5 6V15" stroke="#0000ff" stroke-width="2"/><path d="M3 17.5H16" stroke="#404040" stroke-width="1.2" stroke-dasharray="2 2"/></svg>
<div class="t" style="left:46px;top:534.5px;font-size:14.4px;font-weight:bold;color:#d4d0c8">Signal Quality Window</div>
<div class="btn" style="left:263px;top:532px"></div>
<div class="a" style="left:267px;top:546px;width:8px;height:2px;background:#000"></div>
<div class="btn" style="left:284px;top:532px"></div>
<div class="a" style="left:287px;top:537px;width:12px;height:11px;border:1px solid #000;border-top-width:2px"></div>
<div class="btn" style="left:307px;top:532px"></div>
<svg class="a" style="left:311px;top:536px" width="12" height="11" viewBox="0 0 12 11"><path d="M1 1 L11 10 M11 1 L1 10" stroke="#000" stroke-width="2"/></svg>
<div class="a" style="left:19px;top:554px;width:311px;height:120px;border:1px solid;border-color:#808080 #fff #fff #808080;box-shadow:inset 1px 1px #404040"></div>
<div class="a" style="left:23px;top:559px;width:23px;height:91px;border:1px solid;border-color:#404040 #fff #fff #404040;background:#d4d0c8;overflow:hidden">
<div class="a" style="left:0;top:8px;width:21px;height:81px;background:#0a246a"></div>
<div class="t" style="left:0;top:12px;width:21px;text-align:center;font-size:15.5px;color:#fff">40</div>
</div>
<div class="t" style="left:13px;top:655px;width:43px;text-align:center;font-size:15.8px;color:#000">15</div>
<div class="a" style="left:48px;top:559px;width:23px;height:91px;border:1px solid;border-color:#404040 #fff #fff #404040;background:#d4d0c8;overflow:hidden">
</div>
<div class="t" style="left:38px;top:655px;width:43px;text-align:center;font-size:15.8px;color:#000">14</div>
<div class="a" style="left:73px;top:559px;width:23px;height:91px;border:1px solid;border-color:#404040 #fff #fff #404040;background:#d4d0c8;overflow:hidden">
<div class="a" style="left:0;top:16px;width:21px;height:73px;background:#0a246a"></div>
<div class="t" style="left:0;top:20px;width:21px;text-align:center;font-size:15.5px;color:#fff">39</div>
</div>
<div class="t" style="left:63px;top:655px;width:43px;text-align:center;font-size:15.8px;color:#000">9</div>
<div class="a" style="left:98px;top:559px;width:23px;height:91px;border:1px solid;border-color:#404040 #fff #fff #404040;background:#d4d0c8;overflow:hidden">
<div class="a" style="left:0;top:80px;width:21px;height:9px;background:#0a246a"></div>
<div class="t" style="left:0;top:84px;width:21px;text-align:center;font-size:15.5px;color:#fff">21</div>
</div>
<div class="t" style="left:88px;top:655px;width:43px;text-align:center;font-size:15.8px;color:#000">26</div>
<div class="a" style="left:123px;top:559px;width:23px;height:91px;border:1px solid;border-color:#404040 #fff #fff #404040;background:#d4d0c8;overflow:hidden">
</div>
<div class="t" style="left:113px;top:655px;width:43px;text-align:center;font-size:15.8px;color:#000">16</div>
<div class="a" style="left:148px;top:559px;width:23px;height:91px;border:1px solid;border-color:#404040 #fff #fff #404040;background:#d4d0c8;overflow:hidden">
</div>
<div class="t" style="left:138px;top:655px;width:43px;text-align:center;font-size:15.8px;color:#000">10</div>
<div class="a" style="left:173px;top:559px;width:23px;height:91px;border:1px solid;border-color:#404040 #fff #fff #404040;background:#d4d0c8;overflow:hidden">
<div class="a" style="left:0;top:32px;width:21px;height:57px;background:#808080"></div>
<div class="t" style="left:0;top:36px;width:21px;text-align:center;font-size:15.5px;color:#fff">37</div>
</div>
<div class="t" style="left:163px;top:655px;width:43px;text-align:center;font-size:15.8px;color:#000">28</div>
<div class="a" style="left:198px;top:559px;width:23px;height:91px;border:1px solid;border-color:#404040 #fff #fff #404040;background:#d4d0c8;overflow:hidden">
</div>
<div class="t" style="left:188px;top:655px;width:43px;text-align:center;font-size:15.8px;color:#000">29</div>
<div class="a" style="left:223px;top:559px;width:23px;height:91px;border:1px solid;border-color:#404040 #fff #fff #404040;background:#d4d0c8;overflow:hidden">
<div class="a" style="left:0;top:64px;width:21px;height:25px;background:#0a246a"></div>
<div class="t" style="left:0;top:68px;width:21px;text-align:center;font-size:15.5px;color:#fff">33</div>
</div>
<div class="t" style="left:213px;top:655px;width:43px;text-align:center;font-size:15.8px;color:#000">24</div>
<div class="a" style="left:248px;top:559px;width:23px;height:91px;border:1px solid;border-color:#404040 #fff #fff #404040;background:#d4d0c8;overflow:hidden">
</div>
<div class="t" style="left:238px;top:655px;width:43px;text-align:center;font-size:15.8px;color:#000">31</div>
<div class="a" style="left:273px;top:559px;width:23px;height:91px;border:1px solid;border-color:#404040 #fff #fff #404040;background:#d4d0c8;overflow:hidden">
</div>
<div class="t" style="left:263px;top:655px;width:43px;text-align:center;font-size:15.8px;color:#000">6</div>
<div class="a" style="left:297px;top:559px;width:23px;height:91px;border:1px solid;border-color:#404040 #fff #fff #404040;background:#d4d0c8;overflow:hidden">
<div class="a" style="left:0;top:80px;width:21px;height:9px;background:#0a246a"></div>
<div class="t" style="left:0;top:84px;width:21px;text-align:center;font-size:15.5px;color:#fff">21</div>
</div>
<div class="t" style="left:287px;top:655px;width:43px;text-align:center;font-size:15.8px;color:#000">18</div>
<div class="a" style="left:15px;top:678px;width:320px;height:132px;overflow:hidden">
</div>
<div class="frame" style="left:12px;top:678px;width:318px;height:131px"></div>
<div class="tbar inact" style="left:16px;top:682px;width:310px"></div>
<div class="a" style="left:19px;top:684px;width:20px;height:20px;background:#c8c8d0;border:1px solid;border-color:#fff #808080 #808080 #fff"></div><svg class="a" style="left:19px;top:684px" width="20" height="20" viewBox="0 0 20 20"><path d="M10 1V7M10 7L4 18M10 7L16 18M3 14H17M6 11H14" stroke="#0000a0" stroke-width="1.6" fill="none"/><circle cx="10" cy="6" r="2" fill="#0000a0"/></svg>
<div class="t" style="left:43px;top:686.5px;font-size:14.4px;font-weight:bold;color:#d4d0c8">Navigation Window</div>
<div class="btn" style="left:259px;top:684px"></div>
<div class="a" style="left:263px;top:698px;width:8px;height:2px;background:#000"></div>
<div class="btn" style="left:280px;top:684px"></div>
<div class="a" style="left:283px;top:689px;width:12px;height:11px;border:1px solid #000;border-top-width:2px"></div>
<div class="btn" style="left:303px;top:684px"></div>
<svg class="a" style="left:307px;top:688px" width="12" height="11" viewBox="0 0 12 11"><path d="M1 1 L11 10 M11 1 L1 10" stroke="#000" stroke-width="2"/></svg>
<div class="a" style="left:16px;top:706px;width:310px;height:99px;border:1px solid;border-color:#808080 #fff #fff #808080;box-shadow:inset 1px 1px #404040"></div>
<div class="a" style="left:18px;top:708px;width:304px;height:95px;overflow:hidden">
<div class="t" style="left:2.5px;top:5.2px;font-size:24.3px;color:#000">Latitude</div>
<div class="t" style="left:168px;top:5.2px;font-size:24.3px;color:#000">N 48° 33.4858</div>
<div class="t" style="left:2.5px;top:32.0px;font-size:24.3px;color:#000">Longitude:</div>
<div class="t" style="left:168px;top:32.0px;font-size:24.3px;color:#000">E 007° 36.9413</div>
<div class="t" style="left:2.5px;top:58.8px;font-size:24.3px;color:#000">Altitude:</div>
<div class="t" style="left:168px;top:58.8px;font-size:24.3px;color:#000">206.00&nbsp;&nbsp; m</div>
</div>
<div class="a" style="left:13px;top:676px;width:2px;height:134px;background:#808080"></div>
<div class="a" style="left:14px;top:676px;width:1px;height:134px;background:#404040"></div>
<div class="frame" style="left:333px;top:525px;width:690px;height:284px"></div>
<div class="tbar act" style="left:337px;top:529px;width:682px"></div>
<div class="a" style="left:340px;top:531px;width:20px;height:20px;background:#c8c8d0;border:1px solid;border-color:#fff #808080 #808080 #fff"></div><svg class="a" style="left:340px;top:531px" width="20" height="20" viewBox="0 0 20 20"><rect x="2" y="2" width="16" height="2.5" fill="#0000ff"/><path d="M3 8H17M3 13H17" stroke="#505050" stroke-width="2" stroke-dasharray="1.5 1.5"/></svg>
<div class="t" style="left:364px;top:533.5px;font-size:14.4px;font-weight:bold;color:#fff">Command Monitor</div>
<div class="btn" style="left:952px;top:531px"></div>
<div class="a" style="left:956px;top:545px;width:8px;height:2px;background:#000"></div>
<div class="btn" style="left:973px;top:531px"></div>
<div class="a" style="left:976px;top:536px;width:12px;height:11px;border:1px solid #000;border-top-width:2px"></div>
<div class="btn" style="left:996px;top:531px"></div>
<svg class="a" style="left:1000px;top:535px" width="12" height="11" viewBox="0 0 12 11"><path d="M1 1 L11 10 M11 1 L1 10" stroke="#000" stroke-width="2"/></svg>
<div class="a" style="left:337px;top:554px;width:682px;height:251px;border:1px solid;border-color:#808080 #fff #fff #808080;box-shadow:inset 1px 1px #404040,inset -1px -1px #d4d0c8;background:#fff"></div>
<div class="t" style="left:339.5px;top:558px;font-size:16.1px;color:#000">$GPRMC,133552.902,A,4833.4851,N,00736.9416,E,0.11,41.60,260413,,*36</div>
<div class="t" style="left:339.5px;top:578px;font-size:16.1px;color:#000">$GPGGA,133553.902,4833.4853,N,00736.9415,E,1,05,2.2,205.3,M,47.9,M,0.0,0000*7D</div>
<div class="t" style="left:339.5px;top:598px;font-size:16.1px;color:#000">$GPGSA,A,3,26,24,15,09,18,,,,,,,,4.1,2.2,3.4*36</div>
<div class="t" style="left:339.5px;top:618px;font-size:16.1px;color:#000">$GPRMC,133553.902,A,4833.4853,N,00736.9415,E,0.04,77.36,260413,,*34</div>
<div class="t" style="left:339.5px;top:638px;font-size:16.1px;color:#000">$GPGGA,133554.902,4833.4856,N,00736.9413,E,1,06,1.9,206.0,M,47.9,M,0.0,0000*72</div>
<div class="t" style="left:339.5px;top:658px;font-size:16.1px;color:#000">$GPGSA,A,3,26,24,15,09,18,28,,,,,,,3.9,1.9,3.4*3B</div>
<div class="t" style="left:339.5px;top:678px;font-size:16.1px;color:#000">$GPRMC,133554.902,A,4833.4856,N,00736.9413,E,0.13,14.81,260413,,*3F</div>
<div class="t" style="left:339.5px;top:698px;font-size:16.1px;color:#000">$GPGGA,133555.902,4833.4859,N,00736.9410,E,1,06,1.9,206.6,M,47.9,M,0.0,0000*79</div>
<div class="t" style="left:339.5px;top:718px;font-size:16.1px;color:#000">$GPGSA,A,3,26,24,15,09,18,28,,,,,,,3.9,1.9,3.4*3B</div>
<div class="t" style="left:339.5px;top:738px;font-size:16.1px;color:#000">$GPRMC,133555.902,A,4833.4859,N,00736.9410,E,0.14,18.61,260413,,*37</div>
<div class="a" style="left:997px;top:556px;width:20px;height:227px;background:repeating-conic-gradient(#d4d0c8 0 25%,#fff 0 50%) 0 0/2px 2px"></div>
<div class="a" style="left:997px;top:556px;width:20px;height:20px;background:#d4d0c8;border:1px solid;border-color:#d4d0c8 #404040 #404040 #d4d0c8;box-shadow:inset 1px 1px #fff,inset -1px -1px #808080"></div>
<svg class="a" style="left:997px;top:556px" width="20" height="20"><path d="M5.5 12.5H14.5L10 8Z" fill="#000"/></svg>
<div class="a" style="left:997px;top:747px;width:20px;height:16px;background:#d4d0c8;border:1px solid;border-color:#d4d0c8 #404040 #404040 #d4d0c8;box-shadow:inset 1px 1px #fff,inset -1px -1px #808080"></div>
<div class="a" style="left:997px;top:763px;width:20px;height:20px;background:#d4d0c8;border:1px solid;border-color:#d4d0c8 #404040 #404040 #d4d0c8;box-shadow:inset 1px 1px #fff,inset -1px -1px #808080"></div>
<svg class="a" style="left:997px;top:763px" width="20" height="20"><path d="M5.5 8H14.5L10 12.5Z" fill="#000"/></svg>
<div class="a" style="left:339px;top:783px;width:658px;height:20px;background:repeating-conic-gradient(#d4d0c8 0 25%,#fff 0 50%) 0 0/2px 2px"></div>
<div class="a" style="left:339px;top:783px;width:20px;height:20px;background:#d4d0c8;border:1px solid;border-color:#d4d0c8 #404040 #404040 #d4d0c8;box-shadow:inset 1px 1px #fff,inset -1px -1px #808080"></div>
<svg class="a" style="left:339px;top:783px" width="20" height="20"><path d="M12 5.5V14.5L7.5 10Z" fill="#808080"/><path d="M12.5 5.5V14.5" stroke="#fff" stroke-width="1"/></svg>
<div class="a" style="left:977px;top:783px;width:20px;height:20px;background:#d4d0c8;border:1px solid;border-color:#d4d0c8 #404040 #404040 #d4d0c8;box-shadow:inset 1px 1px #fff,inset -1px -1px #808080"></div>
<svg class="a" style="left:977px;top:783px" width="20" height="20"><path d="M8 5.5V14.5L12.5 10Z" fill="#808080"/><path d="M8.5 14.5L13 10" stroke="#fff" stroke-width="1"/></svg>
<div class="a" style="left:997px;top:783px;width:20px;height:20px;background:#d4d0c8"></div>
<svg class="a" style="left:997px;top:783px" width="20" height="20"><path d="M19 5L5 19M19 9L9 19M19 13L13 19" stroke="#808080" stroke-width="2"/><path d="M19 3.5L3.5 19M19 7.5L7.5 19M19 11.5L11.5 19" stroke="#fff" stroke-width="1"/></svg>
</body></html>
